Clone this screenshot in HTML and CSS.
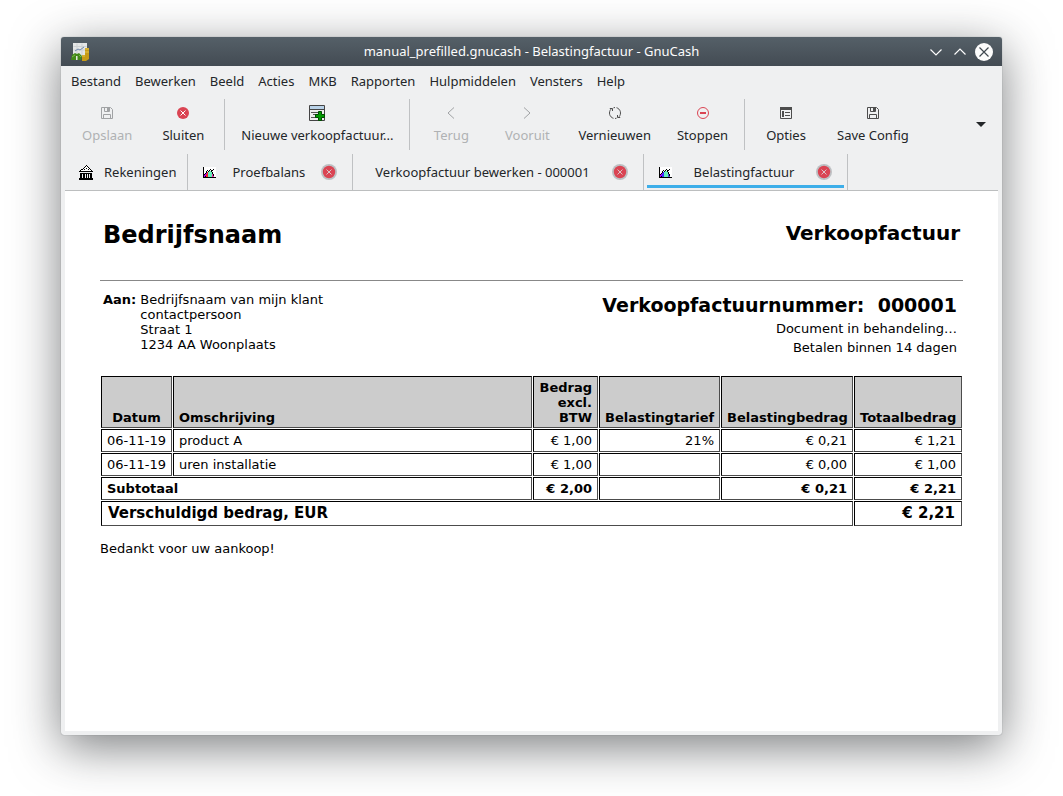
FILE: index.html
```html
<!DOCTYPE html>
<html lang="nl">
<head>
<meta charset="utf-8">
<title>manual_prefilled.gnucash - Belastingfactuur - GnuCash</title>
<link rel="stylesheet" href="styles.css">
</head>
<body>
<svg class="defs" aria-hidden="true">
  <symbol id="i-save" viewBox="0 0 12 12"><path d="M.5.5h9l2 2v9H.5zM3.5.5v4h5v-4M2.5 11.5v-4h7v4" fill="none" stroke="currentColor"/><path d="M6 1h2v3H6z" fill="currentColor"/></symbol>
  <symbol id="i-close" viewBox="0 0 12 12"><circle cx="6" cy="6" r="6" fill="#da4453"/><path d="M3.5 3.5l5 5m0-5l-5 5" stroke="#fff" fill="none"/></symbol>
  <symbol id="i-tabclose" viewBox="0 0 16 16"><circle cx="8" cy="8" r="8" fill="#bdc0c3"/><circle cx="8" cy="8" r="6.2" fill="#da4453"/><path d="M5.500 5.500l5 5m0-5l-5 5" stroke="#dcc3c7" fill="none"/></symbol>
  <symbol id="i-chart" viewBox="0 0 13 12" shape-rendering="crispEdges"><path d="M1 1h12v10H1z" fill="#fff"/><path d="M1 11V9h1V7h1V6h1v5z" fill="#a0f"/><path d="M3 11V8h1V6h1v5z" fill="var(--a)"/><path d="M5 11V5h4v6z" fill="#6eb"/><path d="M9 11V6h1v2h1v3z" fill="var(--b)"/><path d="M1 8h1v1H1zM2 7h1v1H2zM3 5h1v2H3zM4 4h1v1H4zM5 5h1v1H5zM6 4h1v1H6zM7 3h1v1H7zM8 4h1v2H8zM9 4h1v1H9zM10 3h1v1h-1zM9 6h1v2H9zM10 8h1v2h-1zM2 10h1v1H2z" fill="#000"/><path d="M0 1h1v10h12v1H0z" fill="#000"/></symbol>
</svg>
<div class="window">
  <header class="titlebar">
    <svg class="app-icon" viewBox="0 0 20 20"><path d="M3 1h14v14H3z" fill="#e4e6e6"/><path d="M3.500 4.500h13M3.500 8h13M7 1.500v12M12 1.500v12" stroke="#cdd1d3" fill="none"/><path d="M5 9l3-2 2 1 4-3" stroke="#6f88aa" fill="none"/><path d="M1 18l1-5 3-2 2 1 2-1 3 3-1 4z" fill="#438a18"/><path d="M2 15l3-2m4 0l2 2" stroke="#7ab84a" fill="none"/><path d="M6 14h1.500v4H6z" fill="#e5e9df"/><path d="M15 6h4v11l-3 2h-4v-6h3z" fill="#c79b16"/><path d="M15 7h4M15 10h4M12 14h3" stroke="#e2c24e" fill="none"/></svg>
    <h1 class="title">manual_prefilled.gnucash - Belastingfactuur - GnuCash</h1>
    <div class="window-buttons">
      <button type="button" aria-label="Minimaliseren"><svg width="12" height="12" viewBox="0 0 12 12"><path d="M.5 3.500l5.500 5.500 5.500-5.500" fill="none" stroke="#fcfcfc" stroke-width="1.200"/></svg></button>
      <button type="button" aria-label="Maximaliseren"><svg width="12" height="12" viewBox="0 0 12 12"><path d="M.5 8.500L6 3l5.500 5.500" fill="none" stroke="#fcfcfc" stroke-width="1.200"/></svg></button>
      <button type="button" aria-label="Venster sluiten"><svg width="18" height="18" viewBox="0 0 18 18"><circle cx="9" cy="9" r="9" fill="#fcfcfc"/><path d="M4.500 4.500l9 9m0-9l-9 9" stroke="#414950" stroke-width="1.200"/></svg></button>
    </div>
  </header>
  <nav class="menubar">
    <button type="button">Bestand</button><button type="button">Bewerken</button><button type="button">Beeld</button><button type="button">Acties</button><button type="button">MKB</button><button type="button">Rapporten</button><button type="button">Hulpmiddelen</button><button type="button">Vensters</button><button type="button">Help</button>
  </nav>
  <div class="toolbar">
    <button type="button" class="tool" disabled><svg class="ic"><use href="#i-save"/></svg>Opslaan</button>
    <button type="button" class="tool"><svg class="ic"><use href="#i-close"/></svg>Sluiten</button>
    <span class="sep"></span>
    <button type="button" class="tool"><svg class="ic-big" viewBox="0 0 16 16"><path d="M.5.5h15v15H.5z" fill="#eee" stroke="#444"/><path d="M1 1h14v3H1z" fill="#b9d2e8"/><path d="M1 4.500h14" stroke="#444"/><path d="M2 7.500h7M4 9.500h3M2 12.500h6" stroke="#555"/><path d="M9.500 6.500h3v3h3v3h-3v3h-3v-3h-3v-3h3z" fill="#009a00" stroke="#004b00"/></svg>Nieuwe verkoopfactuur...</button>
    <span class="sep"></span>
    <button type="button" class="tool" disabled><svg class="ic" viewBox="0 0 12 12"><path d="M9 .5L3 6l6 5.500" fill="none" stroke="currentColor"/></svg>Terug</button>
    <button type="button" class="tool" disabled><svg class="ic" viewBox="0 0 12 12"><path d="M3 .5L9 6l-6 5.500" fill="none" stroke="currentColor"/></svg>Vooruit</button>
    <button type="button" class="tool"><svg class="ic" viewBox="0 0 12 12"><path d="M4.500 11.300A5.500 5.500 0 0 1 2 2.200M7.500.7A5.500 5.500 0 0 1 10 9.800M.8 1.500H3.500V4M11.200 10.500H8.500V8M4.500.8L6 .5M7.500 11.200L6 11.500" fill="none" stroke="currentColor"/></svg>Vernieuwen</button>
    <button type="button" class="tool"><svg class="ic" viewBox="0 0 12 12"><circle cx="6" cy="6" r="5.500" fill="none" stroke="#da4453"/><path d="M3 6h6" stroke="#da4453" stroke-width="2"/></svg>Stoppen</button>
    <span class="sep"></span>
    <button type="button" class="tool"><svg class="ic" viewBox="0 0 12 12"><path d="M.5.5h11v11H.5z" fill="none" stroke="currentColor"/><path d="M0 0h12v3H0zM2 4h2v6H2z" fill="currentColor"/><path d="M5 5.500h5M5 8.500h5" stroke="currentColor"/></svg>Opties</button>
    <button type="button" class="tool"><svg class="ic"><use href="#i-save"/></svg>Save Config</button>
    <button type="button" class="overflow" aria-label="Meer"><svg width="10" height="5" viewBox="0 0 10 5"><path d="M0 0h10L5 5z" fill="#232629"/></svg></button>
  </div>
  <div class="tabs">
    <div class="tab tab-first">
      <svg class="tab-icon" viewBox="0 0 14 15" shape-rendering="crispEdges"><path d="M7 1l6 5v1H1V6z" fill="#fff"/><path d="M7 0h1v1H7zM6 1h1v1H6zM8 1h1v1H8zM5 2h1v1H5zM9 2h1v1H9zM4 3h1v1H4zM10 3h1v1h-1zM2 4h2v1H2zM11 4h1v1h-1zM1 5h1v1H1zM12 5h1v1h-1zM0 6h14v1H0zM7 3h1v1H7zM5 4h1v1H5zM9 4h1v1H9zM1 8h12v1H1zM1 9h2v4H1zM4 9h2v4H4zM7 9h1v4H7zM9 9h1v4H9zM11 9h2v4h-2zM0 13h14v2H0z" fill="#000"/></svg>
      <button type="button" class="tab-label">Rekeningen</button>
    </div>
    <div class="tab tab-short">
      <svg class="tab-chart chart-green"><use href="#i-chart"/></svg>
      <button type="button" class="tab-label">Proefbalans</button>
      <button type="button" class="tab-close" aria-label="Proefbalans sluiten"><svg><use href="#i-tabclose"/></svg></button>
    </div>
    <div class="tab tab-plain">
      <button type="button" class="tab-label">Verkoopfactuur bewerken - 000001</button>
      <button type="button" class="tab-close" aria-label="Verkoopfactuur sluiten"><svg><use href="#i-tabclose"/></svg></button>
    </div>
    <div class="tab tab-active">
      <svg class="tab-chart"><use href="#i-chart"/></svg>
      <button type="button" class="tab-label">Belastingfactuur</button>
      <button type="button" class="tab-close" aria-label="Belastingfactuur sluiten"><svg><use href="#i-tabclose"/></svg></button>
    </div>
  </div>
  <main class="page">
    <div class="heading">
      <h2 class="company">Bedrijfsnaam</h2>
      <h3 class="kind">Verkoopfactuur</h3>
    </div>
    <div class="parties">
      <div class="client"><strong>Aan:</strong>
        <address>Bedrijfsnaam van mijn klant<br>contactpersoon<br>Straat 1<br>1234 AA Woonplaats</address>
      </div>
      <div class="details">
        <h3 class="number">Verkoopfactuurnummer:&nbsp; 000001</h3>
        <p>Document in behandeling…</p>
        <p>Betalen binnen 14 dagen</p>
      </div>
    </div>
    <table class="entries">
      <colgroup><col class="c-date"><col><col class="c-net"><col class="c-rate"><col class="c-tax"><col class="c-total"></colgroup>
      <thead>
        <tr><th class="center">Datum</th><th class="left">Omschrijving</th><th>Bedrag excl. BTW</th><th>Belastingtarief</th><th>Belastingbedrag</th><th>Totaalbedrag</th></tr>
      </thead>
      <tbody>
        <tr><td class="center">06-11-19</td><td class="left">product A</td><td>€ 1,00</td><td>21%</td><td>€ 0,21</td><td>€ 1,21</td></tr>
        <tr><td class="center">06-11-19</td><td class="left">uren installatie</td><td>€ 1,00</td><td></td><td>€ 0,00</td><td>€ 1,00</td></tr>
        <tr class="subtotal"><td class="left" colspan="2">Subtotaal</td><td>€ 2,00</td><td></td><td>€ 0,21</td><td>€ 2,21</td></tr>
        <tr class="total"><td class="left" colspan="5">Verschuldigd bedrag, EUR</td><td>€ 2,21</td></tr>
      </tbody>
    </table>
    <p class="thanks">Bedankt voor uw aankoop!</p>
  </main>
</div>
</body>
</html>
```
FILE: styles.css
```css
* { box-sizing: border-box; }
body {
  margin: 0;
  min-height: 100vh;
  padding: 37px 61px 61px;
  display: flex;
  background: #fff;
  color: #232629;
  font: 13px/20px "Noto Sans", sans-serif;
}
button {
  margin: 0;
  padding: 0;
  border: 0;
  background: none;
  color: inherit;
  font: inherit;
  white-space: nowrap;
}
svg { display: block; }
.defs { position: absolute; width: 0; height: 0; }
.window {
  flex: 1;
  min-width: 0;
  display: flex;
  flex-direction: column;
  background: #eff0f1;
  border-radius: 3px;
  overflow: hidden;
  box-shadow: 0 12px 48px rgba(35, 38, 41, .6), 0 0 1px #7d8184;
}

/* Title bar */
.titlebar {
  height: 29px;
  display: grid;
  grid-template-columns: 80px 1fr 80px;
  align-items: center;
  padding: 0 9px;
  background: linear-gradient(#556068, #434b53);
  color: #fcfcfc;
}
.app-icon { width: 20px; height: 20px; }
.title {
  margin: 0;
  padding-bottom: 2px;
  text-align: center;
  font-size: 13px;
  font-weight: 400;
  line-height: 18px;
}
.window-buttons { display: flex; align-items: center; justify-content: flex-end; gap: 12px; }
.window-buttons button:last-child { margin-left: -3px; }

/* Menu and tools */
.menubar { height: 30px; display: flex; align-items: center; gap: 14px; padding: 0 10px; }
.toolbar { height: 58px; display: flex; align-items: flex-start; padding: 3px 8px; }
.tool {
  min-width: 76px;
  height: 52px;
  padding: 5px 13px 6px;
  display: flex;
  flex-direction: column;
  align-items: center;
  justify-content: space-between;
}
.tool:disabled { color: #b0b2b4; }
.ic { width: 12px; height: 12px; margin-top: 3px; color: #4d4d4d; }
.tool:disabled .ic { color: #a0a2a4; }
.ic-big { width: 16px; height: 16px; margin-top: 1px; }
.sep { width: 1px; height: 51px; margin: 0 3px; background: #bfc1c3; }
.overflow { margin: 23px 8px 0 auto; }

/* Tabs */
.tabs { margin: 0 4px; display: flex; border-bottom: 1px solid #bcbebf; }
.tab {
  height: 36px;
  display: flex;
  align-items: center;
  padding: 0 15px;
  border-right: 1px solid #bfc1c3;
}
.tab-label { padding: 0 22px; }
.tab-icon { width: 14px; height: 15px; }
.tab-chart { width: 13px; height: 12px; --a: #33f; --b: #55d; }
.chart-green { --a: #e22; --b: #e3a; }
.tab-close svg { width: 16px; height: 16px; }
.tab-first { padding: 0 11px 0 14px; }
.tab-first .tab-label { padding: 0 0 0 11px; }
.tab-short .tab-label { padding: 0 16px; }
.tab-plain { padding-left: 0; }
.tab-active {
  background: linear-gradient(#3daee9, #3daee9) center bottom 2px / calc(100% - 6px) 3px no-repeat;
}

/* Report */
.page {
  flex: 1;
  margin: 0 4px 4px;
  padding: 26px 35px;
  background: #fff;
  color: #000;
  font: 13px/15px "DejaVu Sans", sans-serif;
}
.page h2, .page h3, .page p { margin: 0; }
.heading {
  height: 64px;
  display: flex;
  justify-content: space-between;
  padding: 0 3px;
  border-bottom: 1px solid #888;
}
.page .company { font-size: 24px; line-height: 36px; }
.page .kind { font-size: 20px; line-height: 32px; }
.parties { display: flex; justify-content: space-between; padding: 11px 6px 0 3px; }
.client { display: flex; gap: 4px; }
address { font-style: normal; }
.details { text-align: right; line-height: 19px; }
.page .number { font-size: 19px; line-height: 27px; }
.entries {
  width: 100%;
  margin-top: 18px;
  table-layout: fixed;
  border-spacing: 1px;
}
.entries th, .entries td {
  padding: 3px 5px;
  border: 1px solid;
  border-color: #000 #4c4c4c #4c4c4c #000;
  text-align: right;
}
.entries th { height: 52px; padding: 3px 5px 2px; background: #ccc; vertical-align: bottom; }
.entries .center { text-align: center; }
.entries .left { text-align: left; }
.c-date { width: 71px; }
.c-net { width: 65px; }
.c-rate { width: 121px; }
.c-tax { width: 132px; }
.c-total { width: 108px; }
.subtotal { font-weight: 700; }
.entries .total td { padding: 2px 6px 3px; font-weight: 700; font-size: 15px; line-height: 18px; }
.page .thanks { margin-top: 14px; }
```
